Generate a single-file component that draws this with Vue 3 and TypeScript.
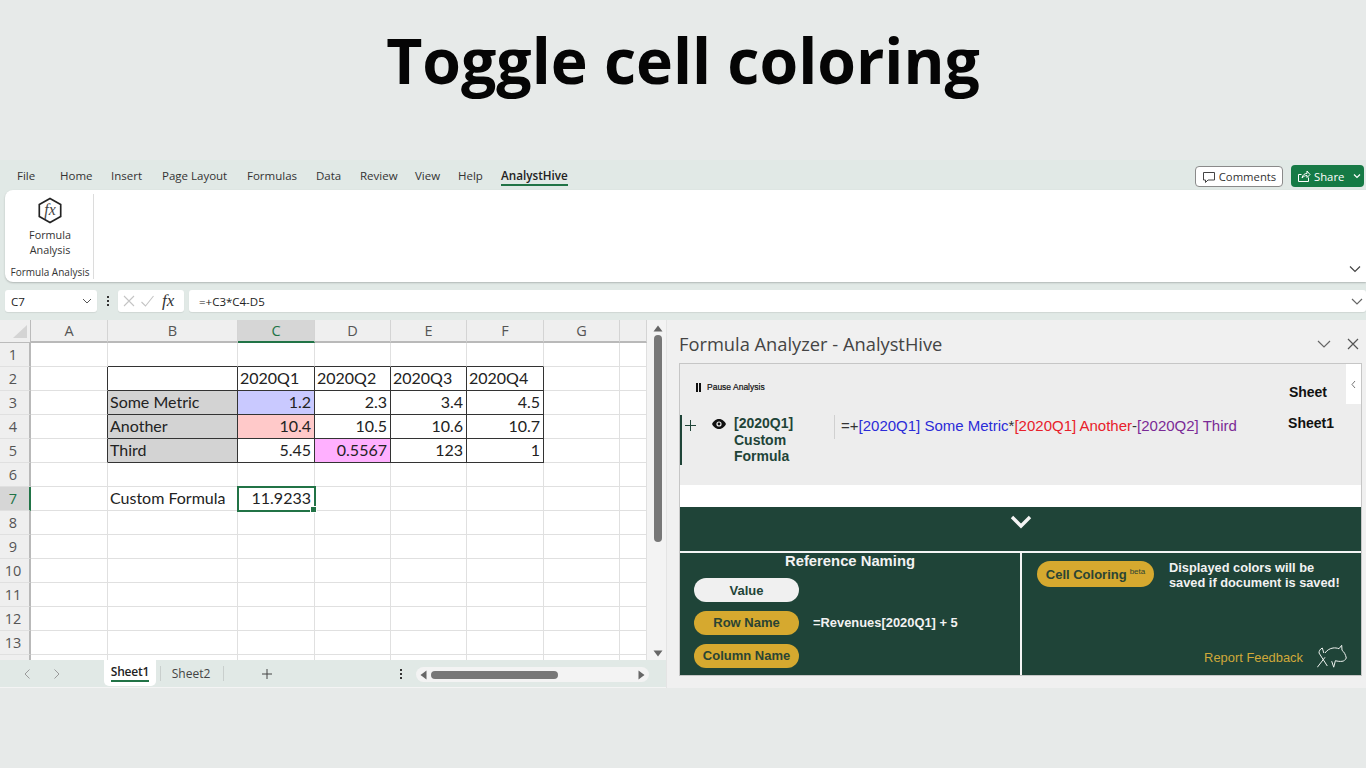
<script setup lang="ts">
interface Cell { t?: string; right?: boolean; bg?: string }
const tabs: string[] = ['File', 'Home', 'Insert', 'Page Layout', 'Formulas', 'Data', 'Review', 'View', 'Help', 'AnalystHive']
const colNames: string[] = ['A', 'B', 'C', 'D', 'E', 'F', 'G', '']
const rowNums: number[] = Array.from({ length: 14 }, (_, i) => i + 1)
const data: Record<string, Cell> = {
  C2: { t: '2020Q1' }, D2: { t: '2020Q2' }, E2: { t: '2020Q3' }, F2: { t: '2020Q4' },
  B3: { t: 'Some Metric', bg: '#d3d3d3' }, C3: { t: '1.2', right: true, bg: '#c9c9ff' }, D3: { t: '2.3', right: true }, E3: { t: '3.4', right: true }, F3: { t: '4.5', right: true },
  B4: { t: 'Another', bg: '#d3d3d3' }, C4: { t: '10.4', right: true, bg: '#ffc9c9' }, D4: { t: '10.5', right: true }, E4: { t: '10.6', right: true }, F4: { t: '10.7', right: true },
  B5: { t: 'Third', bg: '#d3d3d3' }, C5: { t: '5.45', right: true }, D5: { t: '0.5567', right: true, bg: '#ffb0ff' }, E5: { t: '123', right: true }, F5: { t: '1', right: true },
  B7: { t: 'Custom Formula' }, C7: { t: '11.9233', right: true }
}
const tableCols = 'BCDEF'
function inTable(c: string, r: number): boolean { return c !== '' && tableCols.includes(c) && r >= 2 && r <= 5 }
function cellClass(c: string, r: number): Record<string, boolean> {
  return {
    cell: true,
    right: !!data[c + r]?.right,
    'dark-r': inTable(c, r) || (c === 'A' && r >= 2 && r <= 5),
    'dark-b': inTable(c, r) || (c !== '' && tableCols.includes(c) && r === 1),
    sel: c === 'C' && r === 7
  }
}
const cellBg = (c: string, r: number) => (data[c + r]?.bg ? { background: data[c + r].bg } : undefined)
</script>

<template>
  <div class="page">
    <h1 class="title">Toggle cell coloring</h1>
    <div class="excel">
      <div class="tabbar">
        <nav class="tabs">
          <span v-for="t in tabs" :key="t" class="tab" :class="{ active: t === 'AnalystHive' }">{{ t }}</span>
        </nav>
        <div class="top-actions">
          <button class="comments">
            <svg width="14" height="14" viewBox="0 0 14 14" fill="none" stroke="#444" stroke-width="1"><path d="M1.500 2.500h11v7.500H6l-2.500 2.500V10h-2z" /></svg>
            Comments
          </button>
          <button class="share">
            <svg width="14" height="14" viewBox="0 0 14 14" fill="none" stroke="#fff" stroke-width="1"><path d="M1.500 5.500v7h10V8.500M1.500 5.500h3M5 9c.5-3 2.500-4.500 5-4.500V2l3 3.500-3 3V6.500C8 6.500 6.500 7.500 5 9z" /></svg>
            <span>Share</span>
            <svg class="share-caret" width="8" height="6" viewBox="0 0 8 6" fill="none" stroke="#fff" stroke-width="1.200"><path d="M1 1.500l3 3 3-3" /></svg>
          </button>
        </div>
      </div>

      <section class="ribbon">
        <div class="rib-group">
          <svg class="fx-hex" width="26" height="29" viewBox="0 0 26 29"><path d="M13 1.500L24.500 8v13L13 27.500 1.500 21V8z" fill="none" stroke="#222" stroke-width="1.800" /><text x="13" y="19.500" text-anchor="middle" font-family="Liberation Serif, serif" font-style="italic" font-size="17" fill="#444">fx</text></svg>
          <div class="rib-label">Formula<br />Analysis</div>
          <div class="rib-name">Formula Analysis</div>
        </div>
        <svg class="rib-chevron" width="12" height="8" viewBox="0 0 12 8" fill="none" stroke="#444" stroke-width="1.200"><path d="M1 1.500l5 5 5-5" /></svg>
      </section>

      <div class="fbar">
        <div class="namebox"><span>C7</span><svg width="10" height="6" viewBox="0 0 10 6" fill="none" stroke="#555"><path d="M1 1l4 4 4-4" /></svg></div>
        <div class="dots"><i></i><i></i><i></i></div>
        <div class="fx-box">
          <svg width="14" height="14" viewBox="0 0 14 14" fill="none" stroke="#c4c4c4" stroke-width="1.100"><path d="M2 2l10 10M12 2L2 12" /></svg>
          <svg width="15" height="14" viewBox="0 0 15 14" fill="none" stroke="#c4c4c4" stroke-width="1.100"><path d="M1.500 8l4 4 8-10" /></svg>
          <span class="fx">fx</span>
        </div>
        <div class="finput"><span>=+C3*C4-D5</span><svg width="12" height="7" viewBox="0 0 12 7" fill="none" stroke="#666" stroke-width="1.200"><path d="M1 1l5 5 5-5" /></svg></div>
      </div>

      <main class="work">
        <div class="sheet-side">
          <div class="sheet-top">
            <div class="gridwrap">
              <div class="sgrid">
                <div class="corner"><svg width="16" height="15" viewBox="0 0 16 15"><path d="M15 1v13H1z" fill="#d4d4d4" /></svg></div>
                <div v-for="c in colNames" :key="'h' + c" class="colh" :class="{ on: c === 'C' }">{{ c }}</div>
                <template v-for="r in rowNums" :key="r">
                  <div class="rowh" :class="{ on: r === 7 }">{{ r < 14 ? r : '' }}</div>
                  <div v-for="c in colNames" :key="c + r" :class="cellClass(c, r)" :style="cellBg(c, r)">
                    {{ data[c + r]?.t }}
                    <i v-if="c === 'C' && r === 7" class="handle"></i>
                  </div>
                </template>
              </div>
            </div>
            <div class="vscroll">
              <svg width="10" height="7" viewBox="0 0 10 7"><path d="M5 .5L9.500 6.500H.5z" fill="#666" /></svg>
              <div class="vtrack"><div class="vthumb"></div></div>
              <svg width="10" height="7" viewBox="0 0 10 7"><path d="M5 6.500L9.500 .5H.5z" fill="#666" /></svg>
            </div>
          </div>
          <div class="sheetbar">
            <svg class="nav a" width="8" height="12" viewBox="0 0 8 12" fill="none" stroke="#9a9a9a"><path d="M6.500 1.500L2 6l4.500 4.500" /></svg>
            <svg class="nav b" width="8" height="12" viewBox="0 0 8 12" fill="none" stroke="#9a9a9a"><path d="M1.500 1.500L6 6l-4.500 4.500" /></svg>
            <div class="stab on"><span>Sheet1</span></div>
            <div class="stab">Sheet2</div>
            <svg class="plus" width="12" height="12" viewBox="0 0 12 12" stroke="#444"><path d="M6 1v10M1 6h10" /></svg>
            <div class="vdots"><i></i><i></i><i></i></div>
            <div class="hscroll">
              <svg width="7" height="10" viewBox="0 0 7 10"><path d="M.5 5l6-4.500v9z" fill="#666" /></svg>
              <div class="hthumb"></div>
              <svg width="7" height="10" viewBox="0 0 7 10"><path d="M6.500 5l-6-4.500v9z" fill="#666" /></svg>
            </div>
          </div>
        </div>

        <aside class="pane">
          <header class="pane-head">
            <span>Formula Analyzer - AnalystHive</span>
            <div class="pane-icons">
              <svg width="14" height="8" viewBox="0 0 14 8" fill="none" stroke="#666" stroke-width="1.200"><path d="M1 1l6 6 6-6" /></svg>
              <svg width="12" height="12" viewBox="0 0 12 12" fill="none" stroke="#555" stroke-width="1.200"><path d="M1 1l10 10M11 1L1 11" /></svg>
            </div>
          </header>
          <div class="addin">
            <div class="analysis">
              <div class="side-tab"><svg width="5" height="9" viewBox="0 0 5 9" fill="none" stroke="#666" stroke-width=".9"><path d="M4 1L1 4.500 4 8" /></svg></div>
              <div class="ana-top">
                <div class="pause"><span class="pbars"><i></i><i></i></span>Pause Analysis</div>
                <div class="sheet-h">Sheet</div>
              </div>
              <div class="ana-row">
                <div class="plus-col">
                  <svg width="11" height="11" viewBox="0 0 11 11" stroke="#1f4438"><path d="M5.500 0v11M0 5.500h11" /></svg>
                </div>
                <svg class="eye" width="14" height="10" viewBox="0 0 14 10"><path d="M7 0C3.500 0 1 2.800 0 5c1 2.200 3.500 5 7 5s6-2.800 7-5c-1-2.200-3.500-5-7-5z" fill="#111" /><circle cx="7" cy="5" r="2.600" fill="#eee" /><circle cx="7" cy="5" r="1.400" fill="#111" /></svg>
                <div class="ana-name">[2020Q1]<br />Custom<br />Formula</div>
                <div class="ana-formula">=+<span class="blue">[2020Q1] Some Metric</span>*<span class="red">[2020Q1] Another</span>-<span class="purple">[2020Q2] Third</span></div>
                <div class="ana-sheet">Sheet1</div>
              </div>
            </div>
            <div class="spacer"></div>
            <div class="collapse">
              <svg width="22" height="14" viewBox="0 0 22 14" fill="none" stroke="#f4f4f4" stroke-width="3.400"><path d="M2 2l9 9 9-9" /></svg>
            </div>
            <div class="bottom">
              <div class="refs">
                <div class="refs-title">Reference Naming</div>
                <div class="ref-rows">
                  <div class="pill white">Value</div>
                  <div class="pill-row"><div class="pill gold">Row Name</div><span class="example">=Revenues[2020Q1] + 5</span></div>
                  <div class="pill gold">Column Name</div>
                </div>
              </div>
              <div class="coloring">
                <div class="color-top">
                  <div class="pill gold cc">Cell Coloring <sup>beta</sup></div>
                  <p class="note">Displayed colors will be<br />saved if document is saved!</p>
                </div>
                <div class="feedback">
                  <span>Report Feedback</span>
                  <svg width="30" height="24" viewBox="0 0 30 24" fill="none" stroke="#eef2ef" stroke-width="1"><path d="M8 8C10 5 13 3.500 16 3c2-.3 4 0 6 .7l2.700-3.400.3 5c2 1.500 3.500 4 4.300 7.700-1 2-2.500 3.300-4.300 3.300-2 .3-4.500 0-6.600-.6l-1.700 6.500-2-6M.3 22.300L8 12.300M5.300 3C3 4 2 6 2 8l8.300 13M5.300 3l1.500 5" /></svg>
                </div>
              </div>
            </div>
          </div>
        </aside>
      </main>
    </div>
  </div>
</template>

<style>
html, body { margin: 0; background: #e7eae9; }
</style>

<style scoped>
.page { width: 1366px; height: 768px; overflow: hidden; background: #e7eae9; font-family: "Open Sans", "Noto Sans", sans-serif; color: #222; }
.title { margin: 0; height: 160px; box-sizing: border-box; padding-top: 16px; text-align: center; font-family: "Open Sans", sans-serif; font-weight: 700; font-size: 62.500px; line-height: 88px; color: #050505; }
.excel { height: 528px; background: #e1e9e6; display: flex; flex-direction: column; }
.tabbar { height: 30px; display: flex; justify-content: space-between; }
.tabs { display: grid; grid-template-columns: 43px 51px 51px 85px 69px 44px 55px 43px 43px auto; padding-left: 17px; align-items: center; font-size: 11.500px; color: #333; }
.tab { white-space: nowrap; line-height: 17px; }
.tab.active { font-weight: 600; font-size: 11.700px; color: #222; border-bottom: 2px solid #217346; height: 17px; margin-top: 2px; }
.top-actions { display: flex; gap: 8px; padding: 5px 2px 0 0; align-items: flex-start; }
button { font-family: inherit; font-size: 11.300px; display: flex; align-items: center; box-sizing: border-box; padding: 0; }
.comments { width: 88px; height: 21px; margin-top: 1px; gap: 3px; justify-content: center; background: #fff; border: 1px solid #8a8a8a; border-radius: 4px; color: #333; }
.share { width: 73px; height: 22px; gap: 3px; padding-left: 6px; background: #157a45; border: none; border-radius: 4px; color: #fff; }
.share-caret { margin-left: 6px; }
.ribbon { position: relative; height: 92px; margin-left: 5px; background: #fff; border-radius: 8px 0 0 8px; box-shadow: 0 1px 2px rgba(0,0,0,.22); }
.rib-group { width: 89px; height: 85px; margin-top: 2px; border-right: 1px solid #dcdcdc; display: flex; flex-direction: column; align-items: center; box-sizing: border-box; position: relative; top: 2px; padding-left: 2px; }
.fx-hex { margin-top: 3px; }
.rib-label { margin-top: 4px; font-size: 10.800px; line-height: 14.500px; text-align: center; color: #333; }
.rib-name { margin-top: 9px; font-size: 10px; line-height: 13px; white-space: nowrap; color: #333; }
.rib-chevron { position: absolute; right: 5px; bottom: 9px; }
.fbar { height: 22px; margin: 8px 0 8px 5px; display: flex; align-items: stretch; font-size: 11.500px; color: #222; }
.namebox, .fx-box, .finput { background: #fff; border-radius: 3px; display: flex; align-items: center; box-shadow: 0 1px 1px rgba(0,0,0,.08); }
.namebox { width: 92px; justify-content: space-between; padding: 0 5px 0 6px; box-sizing: border-box; }
.dots { width: 21px; display: flex; flex-direction: column; align-items: center; justify-content: center; gap: 2px; }
.dots i { width: 2px; height: 2px; background: #333; }
.fx-box { width: 66px; gap: 4px; padding-left: 4px; box-sizing: border-box; }
.fx { font-family: "Liberation Serif", serif; font-style: italic; font-size: 17px; color: #333; margin-left: 3px; }
.finput { flex: 1; margin-left: 5px; padding: 0 3px 0 10px; justify-content: space-between; }
.work { flex: 1; display: flex; min-height: 0; }
.sheet-side { width: 666px; display: flex; flex-direction: column; }
.sheet-top { height: 340px; display: flex; background: #f3f3f3; }
.gridwrap { width: 647px; height: 340px; overflow: hidden; background: #fff; }
.sgrid { display: grid; grid-template-columns: 31px 77px 130px 77px 76px 76px 77px 76px 27px; grid-template-rows: 23px repeat(14, 24px); font-family: Lato, sans-serif; font-size: 16px; color: #222; }
.corner { background: #efefef; border-right: 1px solid #bbb; border-bottom: 1px solid #bbb; box-sizing: border-box; display: flex; align-items: center; justify-content: flex-end; padding-right: 2px; }
.colh { background: #efefef; border-right: 1px solid #d4d4d4; border-bottom: 2px solid #b9b9b9; box-sizing: border-box; text-align: center; line-height: 21px; color: #555; font-family: "Open Sans", sans-serif; font-size: 14.500px; }
.colh.on { background: #d6d6d6; color: #217346; border-bottom-color: #217346; }
.rowh { background: #efefef; border-right: 2px solid #b9b9b9; border-bottom: 1px solid #e0e0e0; box-sizing: border-box; text-align: center; padding-right: 3px; line-height: 23px; color: #555; font-family: "Open Sans", sans-serif; font-size: 14.500px; }
.rowh.on { background: #d6d6d6; color: #217346; border-right-color: #217346; }
.cell { position: relative; box-sizing: border-box; border-right: 1px solid #e0e0e0; border-bottom: 1px solid #e0e0e0; padding: 0 3px 0 2px; line-height: 21px; white-space: nowrap; overflow: visible; }
.cell.right { text-align: right; }
.cell.dark-r { border-right-color: #333; }
.cell.dark-b { border-bottom-color: #333; }
.cell.sel { outline: 2px solid #217346; outline-offset: -1px; z-index: 2; }
.handle { position: absolute; right: -3px; bottom: -3px; width: 5px; height: 5px; background: #217346; border: 1px solid #fff; box-sizing: content-box; }
.vscroll { width: 17px; margin-left: 2px; background: #f3f3f3; border-radius: 8px; display: flex; flex-direction: column; align-items: center; padding: 5px 0 3px; box-sizing: border-box; }
.vtrack { flex: 1; width: 8px; padding: 3px 0; box-sizing: border-box; }
.vthumb { width: 8px; height: 207px; border-radius: 4px; background: #777; }
.sheetbar { flex: 1; position: relative; display: flex; align-items: center; font-size: 12px; color: #444; border-bottom: 1px solid #f4f4f4; box-sizing: border-box; }
.nav { margin-left: 23px; }
.nav.b { margin-left: 22px; }
.stab { height: 26px; display: flex; align-items: center; justify-content: center; }
.stab.on { width: 52px; margin-left: 43px; align-self: flex-start; background: #fff; border-radius: 0 0 5px 5px; font-weight: 600; color: #222; }
.stab.on span { border-bottom: 2px solid #217346; line-height: 16px; letter-spacing: -.2px; }
.stab:not(.on) { width: 64px; margin-left: 4px; border-left: 1px solid #c9cfcd; border-right: 1px solid #c9cfcd; height: 15px; box-sizing: border-box; padding-right: 2px; }
.plus { margin-left: 37px; }
.vdots { margin-left: 127px; display: flex; flex-direction: column; gap: 2px; }
.vdots i { width: 2px; height: 2px; background: #333; }
.hscroll { position: absolute; left: 416px; top: 7px; width: 233px; height: 15px; background: #f3f3f3; border-radius: 8px; display: flex; align-items: center; padding: 0 4px; box-sizing: border-box; }
.hthumb { width: 127px; height: 8px; background: #777; border-radius: 4px; margin: 0 auto 0 4px; }
.pane { flex: 1; background: #f0f0f0; display: flex; flex-direction: column; padding: 0 4px 12px 12px; border-left: 1px solid #e4e4e4; box-sizing: border-box; }
.pane-head { height: 43px; display: flex; justify-content: space-between; align-items: center; font-size: 18.300px; color: #444; padding-top: 3px; box-sizing: border-box; }
.pane-icons { display: flex; gap: 16px; align-items: center; margin: 2px 3px 0 0; }
.addin { flex: 1; display: flex; flex-direction: column; border: 1px solid #c6c6c6; font-family: "Liberation Sans", sans-serif; min-height: 0; }
.analysis { position: relative; height: 121px; background: #ededed; }
.side-tab { position: absolute; right: 0; top: 0; width: 15px; height: 40px; background: #fff; display: flex; align-items: center; justify-content: center; }
.ana-top { display: flex; justify-content: space-between; padding: 17px 34px 0 16px; height: 51px; box-sizing: border-box; }
.pause { display: flex; align-items: center; gap: 6px; height: 12px; font-size: 8.500px; font-weight: 400; color: #111; -webkit-text-stroke: .2px #111; }
.pbars { display: flex; gap: 1px; }
.pbars i { width: 2px; height: 9px; background: #111; }
.sheet-h { font-size: 14px; font-weight: 700; color: #111; margin-top: 3px; }
.ana-row { display: grid; grid-template-columns: 24px 30px 100px 1fr auto; padding: 0 27px 0 0; height: 51px; }
.plus-col { border-left: 2px solid #1f4438; padding: 2px 0 0 3px; height: 50px; box-sizing: border-box; }
.eye { margin: 4px 0 0 8px; }
.ana-name { font-size: 14px; font-weight: 700; line-height: 16.500px; color: #1f4438; }
.ana-formula { height: 24px; border-left: 1px solid #d0d0d0; padding: 2px 0 0 6px; box-sizing: border-box; font-size: 15px; color: #333; white-space: nowrap; }
.blue { color: #2b2bd8; }
.red { color: #e8202a; }
.purple { color: #7a2a96; }
.ana-sheet { font-size: 14px; font-weight: 700; color: #111; }
.spacer { height: 22px; background: #fff; }
.collapse { height: 44px; background: #1f4438; display: flex; justify-content: center; padding-top: 8px; box-sizing: border-box; align-items: flex-start; }
.bottom { flex: 1; display: grid; grid-template-columns: 340px 1fr; gap: 2px; background: #f4f4f4; padding-top: 2px; }
.refs, .coloring { background: #1f4438; color: #f2f2f2; box-sizing: border-box; }
.refs-title { font-size: 14.800px; font-weight: 700; text-align: center; line-height: 17px; }
.ref-rows { margin: 8px 0 0 14px; display: flex; flex-direction: column; gap: 9px; }
.pill { width: 105px; height: 24px; border-radius: 12px; display: flex; align-items: center; justify-content: center; font-size: 13px; font-weight: 700; white-space: nowrap; box-sizing: border-box; }
.white { background: #f0f0f0; color: #1f4438; }
.gold { background: #d6a92f; color: #2a4434; padding-bottom: 1px; }
.pill-row { display: flex; align-items: center; gap: 14px; }
.example { font-size: 12.900px; font-weight: 700; margin-bottom: 2px; }
.coloring { padding: 8px 15px 0 15px; display: flex; flex-direction: column; }
.color-top { display: flex; gap: 15px; }
.cc { width: 117px; height: 26px; border-radius: 13px; flex: none; padding-bottom: 0; }
.cc sup { font-size: 8px; font-weight: 400; margin-left: 3px; position: relative; top: -2px; line-height: 0; }
.note { margin: -1px 0 0; font-size: 12.800px; font-weight: 700; line-height: 15px; white-space: nowrap; }
.feedback { margin-top: 56px; display: flex; justify-content: flex-end; align-items: center; gap: 14px; font-size: 12.900px; color: #cfa93a; }
.feedback span { margin-bottom: 1px; }
.feedback svg { margin: -1px -1px 0 0; }
</style>
